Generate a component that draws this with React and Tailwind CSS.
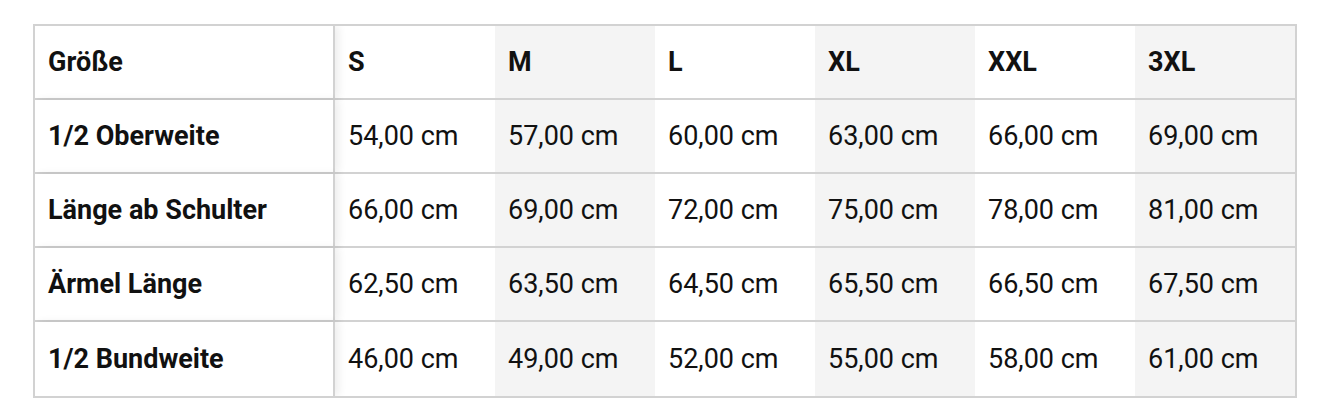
import React from 'react';

const sizes = ['S', 'M', 'L', 'XL', 'XXL', '3XL'];

const rows = [
  { label: '1/2 Oberweite', values: ['54,00', '57,00', '60,00', '63,00', '66,00', '69,00'] },
  { label: 'Länge ab Schulter', values: ['66,00', '69,00', '72,00', '75,00', '78,00', '81,00'] },
  { label: 'Ärmel Länge', values: ['62,50', '63,50', '64,50', '65,50', '66,50', '67,50'] },
  { label: '1/2 Bundweite', values: ['46,00', '49,00', '52,00', '55,00', '58,00', '61,00'] },
];

const Row = ({ label, cells, header, last }) => (
  <div className={`grid grid-cols-[300px_repeat(6,160px)] h-[74px] ${last ? 'h-[72px]' : 'border-b-2 border-[#d2d2d2]'}`}>
    <div className="relative z-10 flex items-center pl-[13px] bg-white border-r-2 border-[#d2d2d2] shadow-[4px_0_8px_rgba(0,0,0,0.07)] font-bold">
      {label}
    </div>
    {cells.map((c, i) => (
      <div
        key={i}
        className={`flex items-center pl-[13px] ${i % 2 === 1 ? 'bg-[#f4f4f4]' : ''} ${header ? 'font-bold' : 'font-normal'}`}
      >
        {c}
      </div>
    ))}
  </div>
);

export default function App() {
  return (
    <div className="bg-white w-[1334px] h-[418px] pt-6 pl-[33px]" style={{ fontFamily: 'Roboto, "Liberation Sans", sans-serif' }}>
      <div className="w-[1264px] border-2 border-[#d2d2d2] text-[27px] text-[#111] leading-none overflow-hidden">
        <Row label="Größe" cells={sizes} header />
        {rows.map((r, i) => (
          <Row key={r.label} label={r.label} cells={r.values.map((v) => `${v} cm`)} last={i === rows.length - 1} />
        ))}
      </div>
    </div>
  );
}
